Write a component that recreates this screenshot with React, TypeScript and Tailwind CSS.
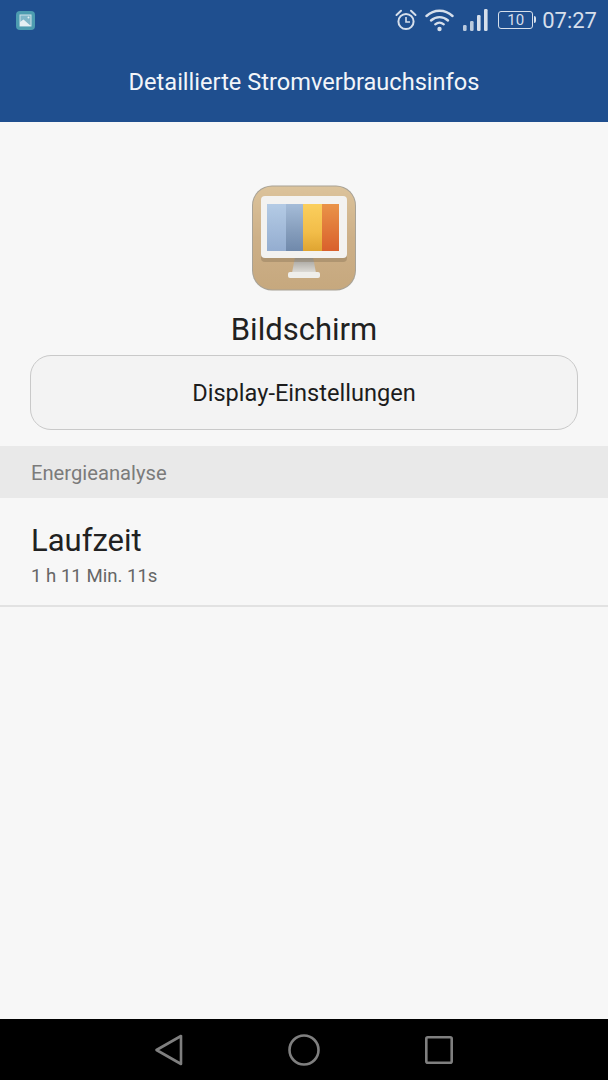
import type { ReactNode } from "react";

function StatusIcon({ width, children }: { width: number; children: ReactNode }) {
  return (
    <svg width={width} height="26" viewBox={`0 0 ${width} 26`} fill="none" aria-hidden>
      {children}
    </svg>
  );
}

function StatusBar() {
  return (
    <div className="flex h-[40px] items-center justify-between pl-[16px] pr-[11px]">
      {/* gallery notification */}
      <svg width="19" height="19" viewBox="0 0 19 19" aria-hidden>
        <rect width="19" height="19" rx="4" fill="#4c9cb0" />
        <rect x="4" y="4" width="11" height="11" fill="#7fb6c8" stroke="#cfe2e9" strokeWidth="1" />
        <path d="M4 15 L4 11 L7.5 8.5 L12 12.5 L15 15 Z" fill="#e4eff3" />
        <circle cx="12.5" cy="6.5" r="1" fill="#e4eff3" />
      </svg>
      <div className="flex items-center text-[#d6dfeb]">
        <StatusIcon width={24}>
          <circle cx="12" cy="14.5" r="7.6" stroke="currentColor" strokeWidth="2" />
          <path d="M12 10 V15 H16" stroke="currentColor" strokeWidth="1.6" />
          <path d="M2.5 8 L7 3.8 M21.5 8 L17 3.8" stroke="currentColor" strokeWidth="2" strokeLinecap="round" />
        </StatusIcon>
        <div className="ml-[7px]">
          <StatusIcon width={29}>
            <path d="M1.5 9 C9 2 20 2 27.5 9" stroke="currentColor" strokeWidth="2.4" strokeLinecap="round" />
            <path d="M6 13.5 C11 9 18 9 23 13.5" stroke="currentColor" strokeWidth="2.4" strokeLinecap="round" />
            <path d="M10.2 17.4 C12.8 15.2 16.2 15.2 18.8 17.4" stroke="currentColor" strokeWidth="2.2" strokeLinecap="round" />
            <circle cx="14.5" cy="22" r="2.2" fill="currentColor" />
          </StatusIcon>
        </div>
        <div className="ml-[9px]">
          <StatusIcon width={25}>
            <rect x="0" y="18" width="3.6" height="6" rx="1.2" fill="currentColor" opacity="0.85" />
            <rect x="7" y="14" width="3.6" height="10" rx="1.2" fill="currentColor" opacity="0.85" />
            <rect x="14" y="8" width="3.6" height="16" rx="1.2" fill="currentColor" />
            <rect x="21" y="2" width="3.6" height="22" rx="1.2" fill="currentColor" />
          </StatusIcon>
        </div>
        {/* battery */}
        <div className="relative ml-[10px] flex h-[18px] w-[35px] items-center justify-center rounded-[3px] border-[1.5px] border-[#d6dfeb] text-[15px] leading-none">
          10
          <span className="absolute right-[-4px] top-[4px] h-[7px] w-[2px] rounded-r-[2px] bg-[#d6dfeb]" />
        </div>
        <span className="ml-[9px] pt-[1px] text-[22px] leading-none">07:27</span>
      </div>
    </div>
  );
}

// Monitor on a tan tile, the app icon of the display entry
function DisplayIcon() {
  return (
    <svg width="106" height="106" viewBox="0 0 106 106" className="blur-[0.6px]" aria-hidden>
      <defs>
        <linearGradient id="tile" x1="0" y1="0" x2="0" y2="1">
          <stop offset="0" stopColor="#dcc39b" />
          <stop offset="0.5" stopColor="#cdb088" />
          <stop offset="1" stopColor="#c6a87e" />
        </linearGradient>
        <linearGradient id="c1" x1="0" y1="0" x2="0" y2="1">
          <stop offset="0" stopColor="#b4cbe5" />
          <stop offset="1" stopColor="#94add0" />
        </linearGradient>
        <linearGradient id="c2" x1="0" y1="0" x2="0" y2="1">
          <stop offset="0" stopColor="#a5bcd8" />
          <stop offset="0.6" stopColor="#849cbb" />
          <stop offset="1" stopColor="#7089ab" />
        </linearGradient>
        <linearGradient id="c3" x1="0" y1="0" x2="0" y2="1">
          <stop offset="0" stopColor="#fbcf5d" />
          <stop offset="0.6" stopColor="#f2bd49" />
          <stop offset="1" stopColor="#dfa431" />
        </linearGradient>
        <linearGradient id="c4" x1="0" y1="0" x2="0" y2="1">
          <stop offset="0" stopColor="#ea9348" />
          <stop offset="1" stopColor="#d9602c" />
        </linearGradient>
        <linearGradient id="stand" x1="0" y1="0" x2="0" y2="1">
          <stop offset="0" stopColor="#9d9a94" />
          <stop offset="1" stopColor="#e0ded9" />
        </linearGradient>
      </defs>
      <rect x="1" y="0.5" width="104" height="105" rx="20" fill="#a8a296" />
      <rect x="2" y="1.5" width="102" height="103" rx="19" fill="url(#tile)" />
      <path d="M44 72 H62 L65 88 H41 Z" fill="url(#stand)" />
      <rect x="37" y="87" width="32" height="6" rx="2" fill="#efeeea" />
      <rect x="10" y="14" width="86" height="63" rx="4" fill="#7d6a4c" opacity="0.35" />
      <rect x="10" y="11" width="86" height="62" rx="4" fill="#f3f2f0" />
      <rect x="16" y="19" width="19" height="47" fill="url(#c1)" />
      <rect x="35" y="19" width="17" height="47" fill="url(#c2)" />
      <rect x="52" y="19" width="19" height="47" fill="url(#c3)" />
      <rect x="71" y="19" width="17" height="47" fill="url(#c4)" />
    </svg>
  );
}

function NavBar() {
  return (
    <div className="flex h-[61px] shrink-0 items-center justify-center gap-[105px] bg-black">
      <svg width="28" height="32" viewBox="0 0 28 32" fill="none" aria-hidden>
        <path d="M1.5 16 L26 2 V30 Z" stroke="#7f7f7f" strokeWidth="2.6" strokeLinejoin="round" />
      </svg>
      <svg width="32" height="32" viewBox="0 0 32 32" fill="none" aria-hidden>
        <circle cx="16" cy="16" r="14.5" stroke="#7f7f7f" strokeWidth="2.6" />
      </svg>
      <svg width="28" height="28" viewBox="0 0 28 28" fill="none" aria-hidden>
        <rect x="1.3" y="1.3" width="25.4" height="25.4" rx="1.5" stroke="#7f7f7f" strokeWidth="2.6" />
      </svg>
    </div>
  );
}

export default function App() {
  return (
    <div className="flex h-[1080px] w-[608px] flex-col overflow-hidden bg-[#f7f7f7] font-['Roboto',sans-serif]">
      <header className="h-[122px] shrink-0 bg-[#1f4f8f]">
        <StatusBar />
        <h1 className="mt-[26px] text-center text-[23.6px] font-normal leading-[32px] text-[#f2f5f9]">
          Detaillierte Stromverbrauchsinfos
        </h1>
      </header>

      <main className="flex-1">
        <div className="flex flex-col items-center pt-[63px]">
          <DisplayIcon />
          <h2 className="mt-[19px] text-[31px] font-normal leading-[40px] text-[#212121]">Bildschirm</h2>
        </div>
        <div className="mt-[5px] px-[30px]">
          <button className="block h-[75px] w-full rounded-[21px] border border-[#c9c9c9] bg-[#f3f3f3] pt-[3px] text-[23.6px] text-[#1c1c1c]">
            Display-Einstellungen
          </button>
        </div>
        <div className="mt-[16px] flex h-[52px] items-center bg-[#e9e9e9] px-[31px] pt-[2px] text-[20.2px] text-[#7b7b7b]">
          Energieanalyse
        </div>
        <div className="flex h-[109px] flex-col border-b-2 border-[#e2e2e2] px-[31px] pt-[23px]">
          <div className="text-[31px] leading-[40px] text-[#212121]">Laufzeit</div>
          <div className="mt-[3px] text-[18.6px] leading-[24px] text-[#666666]">1 h 11 Min. 11s</div>
        </div>
      </main>

      <NavBar />
    </div>
  );
}
